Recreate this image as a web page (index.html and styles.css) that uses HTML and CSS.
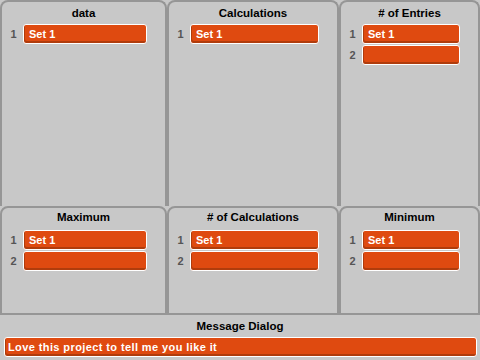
FILE: index.html
```html
<!DOCTYPE html>
<html>
<head>
<meta charset="utf-8">
<link rel="stylesheet" href="styles.css">
</head>
<body>
<div class="stage">
  <div class="row top">
    <section class="panel">
      <div class="title">data</div>
      <ul class="list">
        <li><span class="idx">1</span><span class="cell">Set 1</span></li>
      </ul>
    </section>
    <section class="panel">
      <div class="title">Calculations</div>
      <ul class="list">
        <li><span class="idx">1</span><span class="cell">Set 1</span></li>
      </ul>
    </section>
    <section class="panel">
      <div class="title"># of Entries</div>
      <ul class="list">
        <li><span class="idx">1</span><span class="cell">Set 1</span></li>
        <li><span class="idx">2</span><span class="cell"></span></li>
      </ul>
    </section>
  </div>
  <div class="row bottom">
    <section class="panel">
      <div class="title">Maximum</div>
      <ul class="list">
        <li><span class="idx">1</span><span class="cell">Set 1</span></li>
        <li><span class="idx">2</span><span class="cell"></span></li>
      </ul>
    </section>
    <section class="panel">
      <div class="title"># of Calculations</div>
      <ul class="list">
        <li><span class="idx">1</span><span class="cell">Set 1</span></li>
        <li><span class="idx">2</span><span class="cell"></span></li>
      </ul>
    </section>
    <section class="panel">
      <div class="title">Minimum</div>
      <ul class="list">
        <li><span class="idx">1</span><span class="cell">Set 1</span></li>
        <li><span class="idx">2</span><span class="cell"></span></li>
      </ul>
    </section>
  </div>
  <div class="dialog">
    <div class="title">Message Dialog</div>
    <div class="cell msg">Love this project to tell me you like it</div>
  </div>
</div>
</body>
</html>
```
FILE: styles.css
```css
html, body {
  margin: 0;
  padding: 0;
  background: #c8c8c8;
}
.stage {
  width: 480px;
  height: 360px;
  overflow: hidden;
  background: #c8c8c8;
  font-family: "Liberation Sans", Arial, sans-serif;
  font-weight: bold;
  display: flex;
  flex-direction: column;
}
.row {
  display: grid;
  grid-template-columns: 167px 172px 141px;
}
.top {
  height: 206px;
}
.bottom {
  height: 109px;
}
.panel {
  box-sizing: border-box;
  border: 2px solid #969696;
  border-bottom: none;
  border-radius: 8px 8px 0 0;
  background: #c8c8c8;
}
.bottom .panel {
  border-bottom: 2px solid #969696;
}
.title {
  height: 22px;
  line-height: 22px;
  text-align: center;
  font-size: 11.5px;
  color: #000;
  white-space: nowrap;
}
.bottom .title {
  line-height: 19px;
}
.list {
  list-style: none;
  margin: 0;
  padding: 0 18px 0 0;
  display: flex;
  flex-direction: column;
  gap: 1px;
}
.list li {
  display: flex;
  align-items: center;
}
.idx {
  width: 21px;
  flex: none;
  text-align: center;
  padding-left: 2px;
  box-sizing: border-box;
  font-size: 11px;
  color: #555;
}
.cell {
  flex: 1;
  box-sizing: border-box;
  height: 20px;
  line-height: 18px;
  padding-left: 5px;
  background: #df4a10;
  border: 1px solid #fff;
  border-radius: 3px;
  box-shadow: inset 1px -2px 0 #b03c0c;
  color: #fff;
  font-size: 11px;
  white-space: nowrap;
  overflow: hidden;
}
.dialog {
  display: flex;
  flex-direction: column;
}
.msg {
  flex: none;
  margin: 0 3px 0 4px;
  padding-left: 3px;
  letter-spacing: 0.4px;
}
```
